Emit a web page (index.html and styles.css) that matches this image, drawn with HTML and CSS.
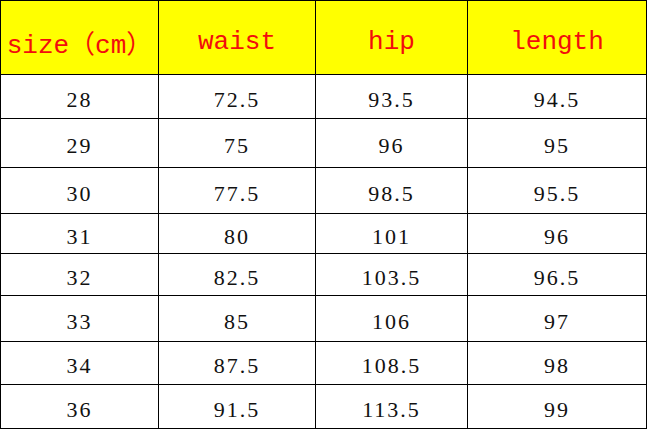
FILE: index.html
```html
<!DOCTYPE html>
<html>
<head>
<meta charset="utf-8">
<link rel="stylesheet" href="styles.css">
</head>
<body>
<div class="chart">
  <div class="cell head">size（cm）</div>
  <div class="cell head">waist</div>
  <div class="cell head">hip</div>
  <div class="cell head">length</div>

  <div class="cell">28</div><div class="cell">72.5</div><div class="cell">93.5</div><div class="cell">94.5</div>
  <div class="cell">29</div><div class="cell">75</div><div class="cell">96</div><div class="cell">95</div>
  <div class="cell">30</div><div class="cell">77.5</div><div class="cell">98.5</div><div class="cell">95.5</div>
  <div class="cell">31</div><div class="cell">80</div><div class="cell">101</div><div class="cell">96</div>
  <div class="cell">32</div><div class="cell">82.5</div><div class="cell">103.5</div><div class="cell">96.5</div>
  <div class="cell">33</div><div class="cell">85</div><div class="cell">106</div><div class="cell">97</div>
  <div class="cell">34</div><div class="cell">87.5</div><div class="cell">108.5</div><div class="cell">98</div>
  <div class="cell">36</div><div class="cell">91.5</div><div class="cell">113.5</div><div class="cell">99</div>
</div>
</body>
</html>
```
FILE: styles.css
```css
html, body {
  margin: 0;
  padding: 0;
  background: #ffffff;
}

.chart {
  display: grid;
  grid-template-columns: 157px 156px 151px 178px;
  grid-template-rows: 73px 43px 48px 45px 39px 41px 45px 42px 43px;
  gap: 1px;
  padding: 1px;
  background: #000000;
  width: max-content;
}

.cell {
  background: #ffffff;
  display: flex;
  align-items: center;
  justify-content: center;
  font-family: "Liberation Serif", "Noto Sans CJK SC", serif;
  font-size: 22px;
  letter-spacing: 2px;
  color: #111111;
  padding-top: 6px;
  box-sizing: border-box;
  white-space: nowrap;
}

.head {
  background: #ffff00;
  color: #f20d0d;
  font-family: "Liberation Mono", "Noto Sans CJK SC", monospace;
  font-size: 26px;
  letter-spacing: 0;
  padding-top: 8px;
}
```
